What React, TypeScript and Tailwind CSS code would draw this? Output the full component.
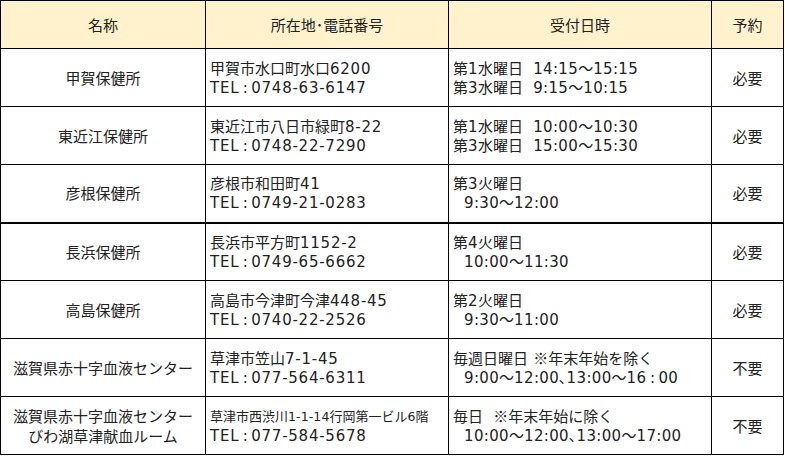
import React from "react";

const jp = { fontFamily: '"Noto Sans CJK JP", sans-serif' };

function T({ s, small, tight }: { s: string; small?: boolean; tight?: boolean }) {
  const parts = s.split(/([\x20-\x7E]+|：)/);
  return (
    <>
      {parts.map((p, i) => {
        if (p === "") return null;
        if (p === "：")
          return (
            <span key={i} className="inline-block w-[12px] text-center font-['DejaVu_Sans']">
              :
            </span>
          );
        if (/^[\x20-\x7E]+$/.test(p))
          return (
            <span
              key={i}
              className={
                small
                  ? "font-['DejaVu_Sans'] text-[12.5px] tracking-[0.1px] whitespace-pre"
                  : tight
                  ? "font-['DejaVu_Sans'] tracking-[0.35px] whitespace-pre"
                  : "font-['DejaVu_Sans'] tracking-[0.75px] whitespace-pre"
              }
            >
              {p}
            </span>
          );
        return <span key={i}>{p}</span>;
      })}
    </>
  );
}

type Row = {
  name: string[];
  addr: string;
  tel: string;
  day: string;
  time: string;
  res: string;
  smallAddr?: boolean;
  thick?: boolean;
};

const rows: Row[] = [
  { name: ["甲賀保健所"], addr: "甲賀市水口町水口6200", tel: "TEL：0748-63-6147", day: "第1水曜日  14:15～15:15", time: "第3水曜日  9:15～10:15", res: "必要" },
  { name: ["東近江保健所"], addr: "東近江市八日市緑町8-22", tel: "TEL：0748-22-7290", day: "第1水曜日  10:00～10:30", time: "第3水曜日  15:00～15:30", res: "必要" },
  { name: ["彦根保健所"], addr: "彦根市和田町41", tel: "TEL：0749-21-0283", day: "第3火曜日", time: "9:30～12:00", res: "必要", thick: true },
  { name: ["長浜保健所"], addr: "長浜市平方町1152-2", tel: "TEL：0749-65-6662", day: "第4火曜日", time: "10:00～11:30", res: "必要" },
  { name: ["高島保健所"], addr: "高島市今津町今津448-45", tel: "TEL：0740-22-2526", day: "第2火曜日", time: "9:30～11:00", res: "必要" },
  { name: ["滋賀県赤十字血液センター"], addr: "草津市笠山7-1-45", tel: "TEL：077-564-6311", day: "毎週日曜日 ※年末年始を除く", time: "9:00～12:00､13:00～16：00", res: "不要" },
  { name: ["滋賀県赤十字血液センター", "びわ湖草津献血ルーム"], addr: "草津市西渋川1-1-14行岡第一ビル6階", tel: "TEL：077-584-5678", day: "毎日  ※年末年始に除く", time: "10:00～12:00､13:00～17:00", res: "不要", smallAddr: true },
];

export default function App() {
  return (
    <div className="w-[785px] h-[456px] bg-white" style={jp}>
      <table className="border-collapse text-[15px] leading-[18px] text-[#222] table-fixed w-[783px]">
        <colgroup>
          <col className="w-[205px]" />
          <col className="w-[243px]" />
          <col className="w-[263px]" />
          <col className="w-[72px]" />
        </colgroup>
        <thead>
          <tr className="h-[48px] bg-[#fff2cc]">
            <th className="border border-black font-normal text-center">名称</th>
            <th className="border border-black font-normal text-center">所在地･電話番号</th>
            <th className="border border-black font-normal text-center">受付日時</th>
            <th className="border border-black font-normal text-center">予約</th>
          </tr>
        </thead>
        <tbody>
          {rows.map((r, i) => {
            const b = r.thick ? "border border-black border-b-2" : "border border-black";
            const indent = r.time.startsWith("第") ? "" : "pl-[11px]";
            return (
              <tr key={i} className="h-[58px]">
                <td className={b + " text-center align-middle"}>
                  {r.name.map((n, j) => (
                    <div key={j} className="leading-[20px]">{n}</div>
                  ))}
                </td>
                <td className={b + " pl-[4px] align-middle"}>
                  <div className={r.smallAddr ? "text-[13px] leading-[18px]" : ""}>
                    <T s={r.addr} small={r.smallAddr} />
                  </div>
                  <div>
                    <T s={r.tel} />
                  </div>
                </td>
                <td className={b + " pl-[4px] align-middle"}>
                  <div>
                    <T s={r.day} tight />
                  </div>
                  <div className={indent}>
                    <T s={r.time} tight />
                  </div>
                </td>
                <td className={b + " text-center align-middle"}>{r.res}</td>
              </tr>
            );
          })}
        </tbody>
      </table>
    </div>
  );
}
